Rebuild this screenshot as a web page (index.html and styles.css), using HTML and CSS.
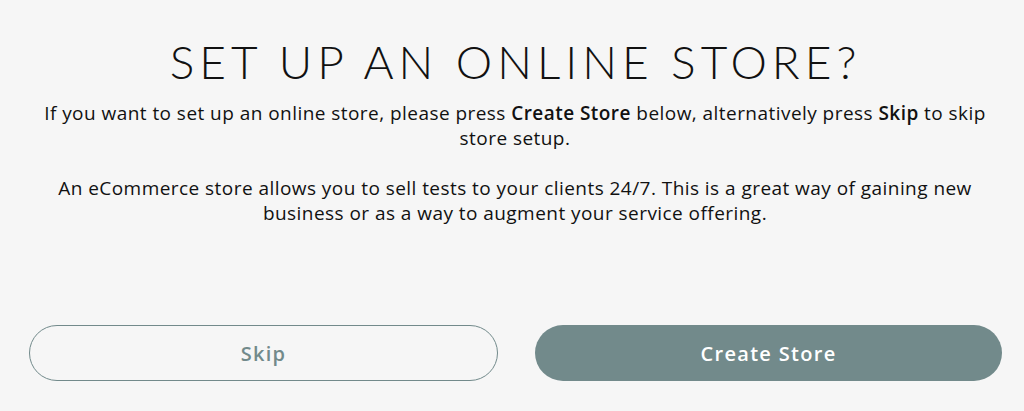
FILE: index.html
```html
<!DOCTYPE html>
<html>
<head>
<meta charset="utf-8">
<link rel="stylesheet" href="styles.css">
</head>
<body>
<main class="page">
  <h1 class="title">SET UP AN ONLINE STORE?</h1>
  <div class="copy">
    <p>If you want to set up an online store, please press <strong>Create Store</strong> below, alternatively press <strong>Skip</strong> to skip store setup.</p>
    <p>An eCommerce store allows you to sell tests to your clients 24/7. This is a great way of gaining new business or as a way to augment your service offering.</p>
  </div>
  <div class="actions">
    <button class="btn btn-outline">Skip</button>
    <button class="btn btn-solid">Create Store</button>
  </div>
</main>
</body>
</html>
```
FILE: styles.css
```css
html, body {
  margin: 0;
  padding: 0;
  background: #f6f6f6;
}
.page {
  width: 1024px;
  height: 411px;
  box-sizing: border-box;
  padding: 0 22px 0 29px;
  display: flex;
  flex-direction: column;
  font-family: "Open Sans", "Liberation Sans", sans-serif;
  color: #111;
}
.title {
  margin: 36px 0 0;
  text-align: center;
  font-family: "Lato", "Liberation Sans", sans-serif;
  font-weight: 300;
  font-size: 46px;
  line-height: 52px;
  letter-spacing: 5px;
  color: #111;
}
.copy {
  margin-top: 13px;
  padding: 0 14px 0 13px;
  text-align: center;
  font-size: 19px;
  line-height: 25px;
  letter-spacing: 0.45px;
}
.copy p {
  margin: 0 0 25px;
}
.copy strong {
  font-weight: 600;
}
.actions {
  margin-top: auto;
  margin-bottom: 30px;
  display: flex;
  gap: 37px;
}
.btn {
  flex: 1;
  height: 56px;
  border-radius: 28px;
  font-family: "Open Sans", "Liberation Sans", sans-serif;
  font-size: 20px;
  font-weight: 600;
  letter-spacing: 1.3px;
  cursor: pointer;
}
.btn-outline {
  background: transparent;
  border: 1.5px solid #728a8b;
  color: #728a8b;
}
.btn-solid {
  background: #728a8b;
  border: none;
  color: #fff;
}
```
